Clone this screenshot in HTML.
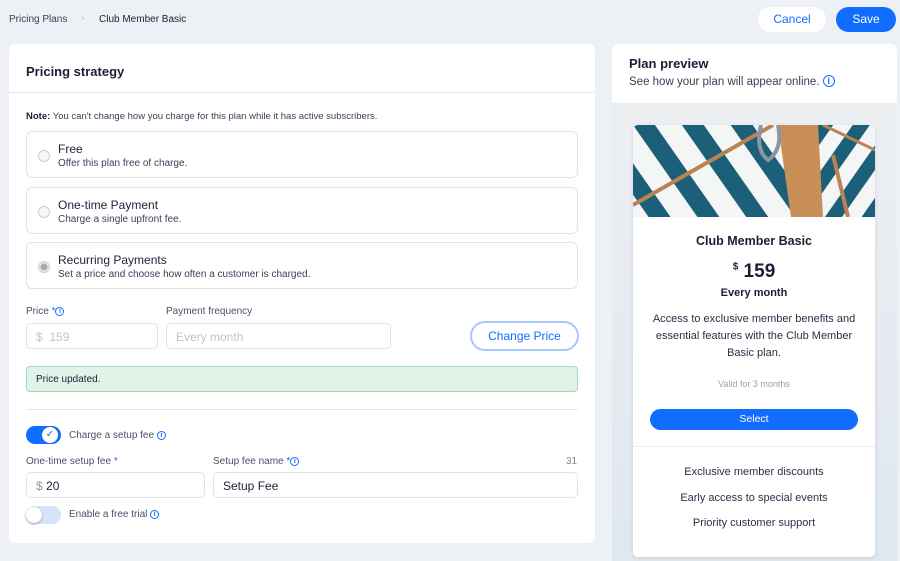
<!DOCTYPE html>
<html><head><meta charset="utf-8"><style>
*{box-sizing:border-box;margin:0;padding:0}
body{width:900px;height:561px;overflow:hidden;background:#edf0f4;font-family:"Liberation Sans",sans-serif;color:#1a1f36;position:relative}
.abs{position:absolute}
.card{background:#fff;border-radius:6px}
.opt{position:absolute;left:26px;width:552px;height:47px;border:1px solid #dfe3ea;border-radius:6px;background:#fff}
.opt .r{position:absolute;left:11px;top:18px;width:12px;height:12px;border-radius:50%;border:1px solid #c8ccd4;background:#f7f7f7}
.opt .t{position:absolute;left:31px;top:10px;font-size:12px;color:#20243a}
.opt .s{position:absolute;left:31px;top:26px;font-size:10px;color:#3b4057}
.inp{position:absolute;height:26px;border:1px solid #dfe3ea;border-radius:5px;background:#fff;font-size:12px;padding:6px 9px}
.lbl{position:absolute;font-size:10px;color:#4a5068}
.info{display:inline-block;width:9px;height:9px;border:1px solid #116dff;border-radius:50%;font-size:7px;line-height:8px;text-align:center;color:#116dff;vertical-align:1px;font-weight:bold}
.star{color:#116dff}
.pc{position:absolute;left:0;width:242px;text-align:center}
</style></head><body>
<div class="abs" style="left:9px;top:14px;font-size:10px;color:#3b4057">Pricing Plans</div>
<div class="abs" style="left:81px;top:13px;font-size:10px;color:#bbb">›</div>
<div class="abs" style="left:99px;top:14px;font-size:10px;color:#1a1f36">Club Member Basic</div>
<div class="abs" style="left:758px;top:7px;width:68px;height:25px;border-radius:13px;background:#fff;color:#116dff;font-size:12px;text-align:center;line-height:25px">Cancel</div>
<div class="abs" style="left:836px;top:7px;width:60px;height:25px;border-radius:13px;background:#116dff;color:#fff;font-size:12px;text-align:center;line-height:25px">Save</div>

<div class="abs card" style="left:9px;top:44px;width:586px;height:499px"></div>
<div class="abs" style="left:26px;top:64px;font-size:13px;font-weight:bold">Pricing strategy</div>
<div class="abs" style="left:9px;top:92px;width:586px;height:1px;background:#e3e6ec"></div>
<div class="abs" style="left:26px;top:111px;font-size:9.5px;color:#3b4057"><b style="color:#1a1f36">Note:</b> You can't change how you charge for this plan while it has active subscribers.</div>
<div class="opt" style="top:131px"><div class="r"></div><div class="t">Free</div><div class="s">Offer this plan free of charge.</div></div>
<div class="opt" style="top:187px"><div class="r"></div><div class="t">One-time Payment</div><div class="s">Charge a single upfront fee.</div></div>
<div class="opt" style="top:242px"><div class="r" style="background:radial-gradient(circle,#aaa 3px,#eee 4px)"></div><div class="t">Recurring Payments</div><div class="s">Set a price and choose how often a customer is charged.</div></div>

<div class="lbl" style="left:26px;top:306px">Price <span class="star">*</span><span class="info">i</span></div>
<div class="lbl" style="left:166px;top:306px">Payment frequency</div>
<div class="inp" style="left:26px;top:323px;width:132px;color:#c0c4cc">$ &nbsp;159</div>
<div class="inp" style="left:166px;top:323px;width:225px;color:#c0c4cc">Every month</div>
<div class="abs" style="left:470px;top:321px;width:109px;height:30px;border:2px solid #a9c8fa;border-radius:15px;color:#116dff;font-size:12px;text-align:center;line-height:26px;background:#fff">Change Price</div>
<div class="abs" style="left:26px;top:366px;width:552px;height:26px;background:#e0f3e8;border:1px solid #a6d8b8;border-radius:4px;font-size:10px;padding:7px 9px;color:#20243a">Price updated.</div>
<div class="abs" style="left:26px;top:409px;width:552px;height:1px;background:#e3e6ec"></div>

<div class="abs" style="left:26px;top:426px;width:35px;height:18px;border-radius:9px;background:#116dff"></div>
<div class="abs" style="left:42px;top:427px;width:16px;height:16px;border-radius:50%;background:#fff;color:#116dff;font-size:10px;text-align:center;line-height:16px">✓</div>
<div class="lbl" style="left:69px;top:430px">Charge a setup fee <span class="info">i</span></div>
<div class="lbl" style="left:26px;top:456px">One-time setup fee <span class="star">*</span></div>
<div class="lbl" style="left:213px;top:456px">Setup fee name <span class="star">*</span><span class="info">i</span></div>
<div class="lbl" style="left:566px;top:456px;color:#888">31</div>
<div class="inp" style="left:26px;top:472px;width:179px;color:#20243a"><span style="color:#999">$</span> 20</div>
<div class="inp" style="left:213px;top:472px;width:365px;color:#20243a">Setup Fee</div>
<div class="abs" style="left:26px;top:506px;width:35px;height:18px;border-radius:9px;background:#d6e4fb"></div>
<div class="abs" style="left:26px;top:507px;width:16px;height:16px;border-radius:50%;background:#fff;box-shadow:0 1px 2px #999"></div>
<div class="lbl" style="left:69px;top:509px">Enable a free trial <span class="info">i</span></div>

<div class="abs" style="left:612px;top:44px;width:285px;height:517px;background:linear-gradient(180deg,#eef0f3,#dfe7ef)"></div>
<div class="abs" style="left:612px;top:44px;width:285px;height:59px;background:#fff;border-radius:6px 6px 0 0"></div>
<div class="abs" style="left:629px;top:56px;font-size:13px;font-weight:bold">Plan preview</div>
<div class="abs" style="left:629px;top:75px;font-size:11.5px;color:#3b4057">See how your plan will appear online. <span class="info" style="width:12px;height:12px;line-height:11px;font-size:9px">i</span></div>

<div class="abs" style="left:633px;top:125px;width:242px;height:432px;background:#fff;border-radius:5px;box-shadow:0 1px 4px rgba(0,0,0,.1);overflow:hidden">
<svg class="abs" style="left:0;top:0" width="242" height="92" viewBox="0 0 242 92">
<defs><pattern id="p" width="40" height="40" patternUnits="userSpaceOnUse" patternTransform="rotate(-35)"><rect width="40" height="40" fill="#f4f6f6"/><rect width="18" height="40" fill="#1c5f78"/></pattern>
<pattern id="q" width="30" height="30" patternUnits="userSpaceOnUse" patternTransform="rotate(35)"><rect width="30" height="30" fill="#f4f6f6"/><rect width="14" height="30" fill="#1c5f78"/></pattern></defs>
<rect width="242" height="92" fill="url(#p)"/>
<polygon points="150,0 242,0 242,92 170,92" fill="url(#q)"/>
<line x1="0" y1="80" x2="140" y2="0" stroke="#b98452" stroke-width="4"/>
<line x1="190" y1="0" x2="242" y2="25" stroke="#b98452" stroke-width="3"/>
<line x1="200" y1="30" x2="215" y2="92" stroke="#b98452" stroke-width="4"/>
<polygon points="145,0 185,0 190,92 158,92" fill="#c98f58"/>
<path d="M128 0 Q122 25 135 35 Q150 25 145 0" fill="none" stroke="#8a96a0" stroke-width="4"/>
</svg>
<div class="pc" style="top:109px;font-size:12.5px;font-weight:bold">Club Member Basic</div>
<div class="pc" style="top:136px;font-size:19px;font-weight:bold"><sup style="font-size:10px">$</sup> 159</div>
<div class="pc" style="top:162px;font-size:11px;font-weight:bold">Every month</div>
<div class="pc" style="top:186px;font-size:11px;line-height:17px;color:#2a2f45;padding:0 18px">Access to exclusive member benefits and essential features with the Club Member Basic plan.</div>
<div class="pc" style="top:254px;font-size:9px;color:#9a9fae">Valid for 3 months</div>
<div class="abs" style="left:17px;top:284px;width:208px;height:21px;border-radius:11px;background:#116dff;color:#fff;font-size:10.5px;text-align:center;line-height:21px">Select</div>
<div class="abs" style="left:0;top:321px;width:242px;height:1px;background:#eceef2"></div>
<div class="pc" style="top:335px;font-size:11px;color:#2a2f45;line-height:25.5px">Exclusive member discounts<br>Early access to special events<br>Priority customer support</div>
</div>
</body></html>
